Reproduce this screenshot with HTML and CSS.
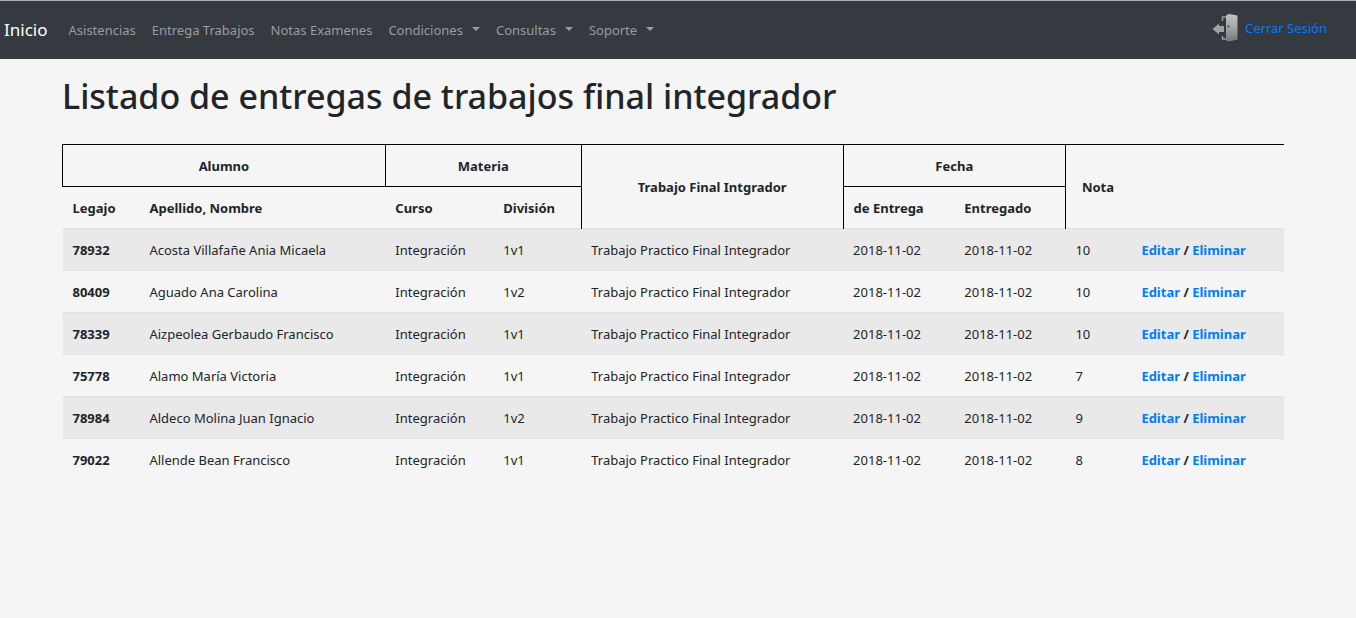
FILE: index.html
```html
<!DOCTYPE html>
<html lang="es">
<head>
<meta charset="utf-8">
<meta name="viewport" content="width=device-width, initial-scale=1">
<title>Listado de entregas</title>
<link rel="stylesheet" href="styles.css">
</head>
<body>
<nav class="navbar">
  <a class="brand" href="#">Inicio</a>
  <ul class="menu">
    <li><a class="menu-link" href="#">Asistencias</a></li>
    <li><a class="menu-link" href="#">Entrega Trabajos</a></li>
    <li><a class="menu-link" href="#">Notas Examenes</a></li>
    <li><a class="menu-link dropdown" href="#">Condiciones</a></li>
    <li><a class="menu-link dropdown" href="#">Consultas</a></li>
    <li><a class="menu-link dropdown" href="#">Soporte</a></li>
  </ul>
  <a class="logout" href="#">
    <svg class="logout-icon" width="28" height="30" viewBox="0 0 28 30" aria-hidden="true">
      <defs>
        <linearGradient id="door" x1="0" y1="0" x2="0" y2="1">
          <stop offset="0" stop-color="#c2c2c2"/>
          <stop offset="0.5" stop-color="#a4a4a4"/>
          <stop offset="1" stop-color="#777"/>
        </linearGradient>
      </defs>
      <path d="M15 4H10.500V8M10.500 23V26H15" fill="none" stroke="#999b9e" stroke-width="1.5"/>
      <path d="M14 2.500L17 1L25.500 2.500V26.500L17 28.500L14 27.500Z" fill="url(#door)"/>
      <path d="M0.500 16L7 10.500V13H12V19H7V21.500Z" fill="#a0a0a0"/>
      <circle cx="16.500" cy="13.500" r="1" fill="#333"/>
    </svg>
    <span>Cerrar Sesión</span>
  </a>
</nav>
<main class="content">
  <h1 class="title">Listado de entregas de trabajos final integrador</h1>
  <table class="grid">
    <colgroup>
      <col class="c-id"><col class="c-name"><col class="c-course"><col class="c-div"><col class="c-work"><col class="c-date"><col class="c-date"><col class="c-mark"><col class="c-actions">
    </colgroup>
    <thead>
      <tr>
        <th class="group" colspan="2">Alumno</th>
        <th class="group" colspan="2">Materia</th>
        <th class="tall" rowspan="2">Trabajo Final Intgrador</th>
        <th class="group" colspan="2">Fecha</th>
        <th class="mark" rowspan="2">Nota</th>
        <td class="blank" rowspan="2"></td>
      </tr>
      <tr>
        <th>Legajo</th><th>Apellido, Nombre</th><th>Curso</th><th>División</th><th>de Entrega</th><th>Entregado</th>
      </tr>
    </thead>
    <tbody>
      <tr><th>78932</th><td>Acosta Villafañe Ania Micaela</td><td>Integración</td><td>1v1</td><td>Trabajo Practico Final Integrador</td><td>2018-11-02</td><td>2018-11-02</td><td>10</td><th><a href="#">Editar</a> / <a href="#">Eliminar</a></th></tr>
      <tr><th>80409</th><td>Aguado Ana Carolina</td><td>Integración</td><td>1v2</td><td>Trabajo Practico Final Integrador</td><td>2018-11-02</td><td>2018-11-02</td><td>10</td><th><a href="#">Editar</a> / <a href="#">Eliminar</a></th></tr>
      <tr><th>78339</th><td>Aizpeolea Gerbaudo Francisco</td><td>Integración</td><td>1v1</td><td>Trabajo Practico Final Integrador</td><td>2018-11-02</td><td>2018-11-02</td><td>10</td><th><a href="#">Editar</a> / <a href="#">Eliminar</a></th></tr>
      <tr><th>75778</th><td>Alamo María Victoria</td><td>Integración</td><td>1v1</td><td>Trabajo Practico Final Integrador</td><td>2018-11-02</td><td>2018-11-02</td><td>7</td><th><a href="#">Editar</a> / <a href="#">Eliminar</a></th></tr>
      <tr><th>78984</th><td>Aldeco Molina Juan Ignacio</td><td>Integración</td><td>1v2</td><td>Trabajo Practico Final Integrador</td><td>2018-11-02</td><td>2018-11-02</td><td>9</td><th><a href="#">Editar</a> / <a href="#">Eliminar</a></th></tr>
      <tr><th>79022</th><td>Allende Bean Francisco</td><td>Integración</td><td>1v1</td><td>Trabajo Practico Final Integrador</td><td>2018-11-02</td><td>2018-11-02</td><td>8</td><th><a href="#">Editar</a> / <a href="#">Eliminar</a></th></tr>
    </tbody>
  </table>
</main>
</body>
</html>
```
FILE: styles.css
```css
* { box-sizing: border-box; }
body {
  margin: 0;
  background: #f5f5f5;
  color: #212529;
  font-family: "Noto Sans", "Open Sans", sans-serif;
  font-size: 13px;
  line-height: 20px;
}
a { color: #007bff; text-decoration: none; }
.navbar {
  display: flex;
  align-items: center;
  min-height: 59px;
  padding: 0 29px 0 4px;
  border-top: 1px solid #acaeb1;
  background: #343a40;
}
.brand { margin-right: 21px; color: #fff; font-size: 17px; }
.menu {
  display: flex;
  gap: 16px;
  margin: 0;
  padding: 0;
  list-style: none;
}
.menu-link { color: #999c9f; }
.dropdown::after {
  content: "";
  display: inline-block;
  margin-left: 9px;
  vertical-align: 4px;
  border-top: 4px solid;
  border-right: 4px solid transparent;
  border-left: 4px solid transparent;
}
.logout {
  display: flex;
  align-items: center;
  gap: 5px;
  margin-left: auto;
  padding-bottom: 4px;
}
.content { padding: 13px 72px 24px 62px; }
.title {
  margin: 0 0 24px;
  font-size: 34px;
  font-weight: 500;
  line-height: 48px;
}
.grid {
  width: 100%;
  table-layout: fixed;
  border-collapse: collapse;
}
.grid th, .grid td {
  height: 42px;
  padding: 10px;
  border-top: 1px solid #dee2e6;
  text-align: left;
  white-space: nowrap;
}
.grid thead th, .grid thead .blank { border-color: #000; }
.grid thead .group {
  border: 1px solid #000;
  text-align: center;
}
.grid thead .tall {
  border-right: 1px solid #000;
  border-left: 1px solid #000;
  text-align: center;
}
.grid thead .mark {
  border-left: 1px solid #000;
  padding-left: 16px;
}
.grid tbody tr:nth-child(odd) { background: #e9e9e9; }
.c-id { width: 6.3%; }
.c-name { width: 20.13%; }
.c-course { width: 8.84%; }
.c-div { width: 7.2%; }
.c-work { width: 21.44%; }
.c-date { width: 9.1%; }
.c-mark { width: 5.4%; }
```
